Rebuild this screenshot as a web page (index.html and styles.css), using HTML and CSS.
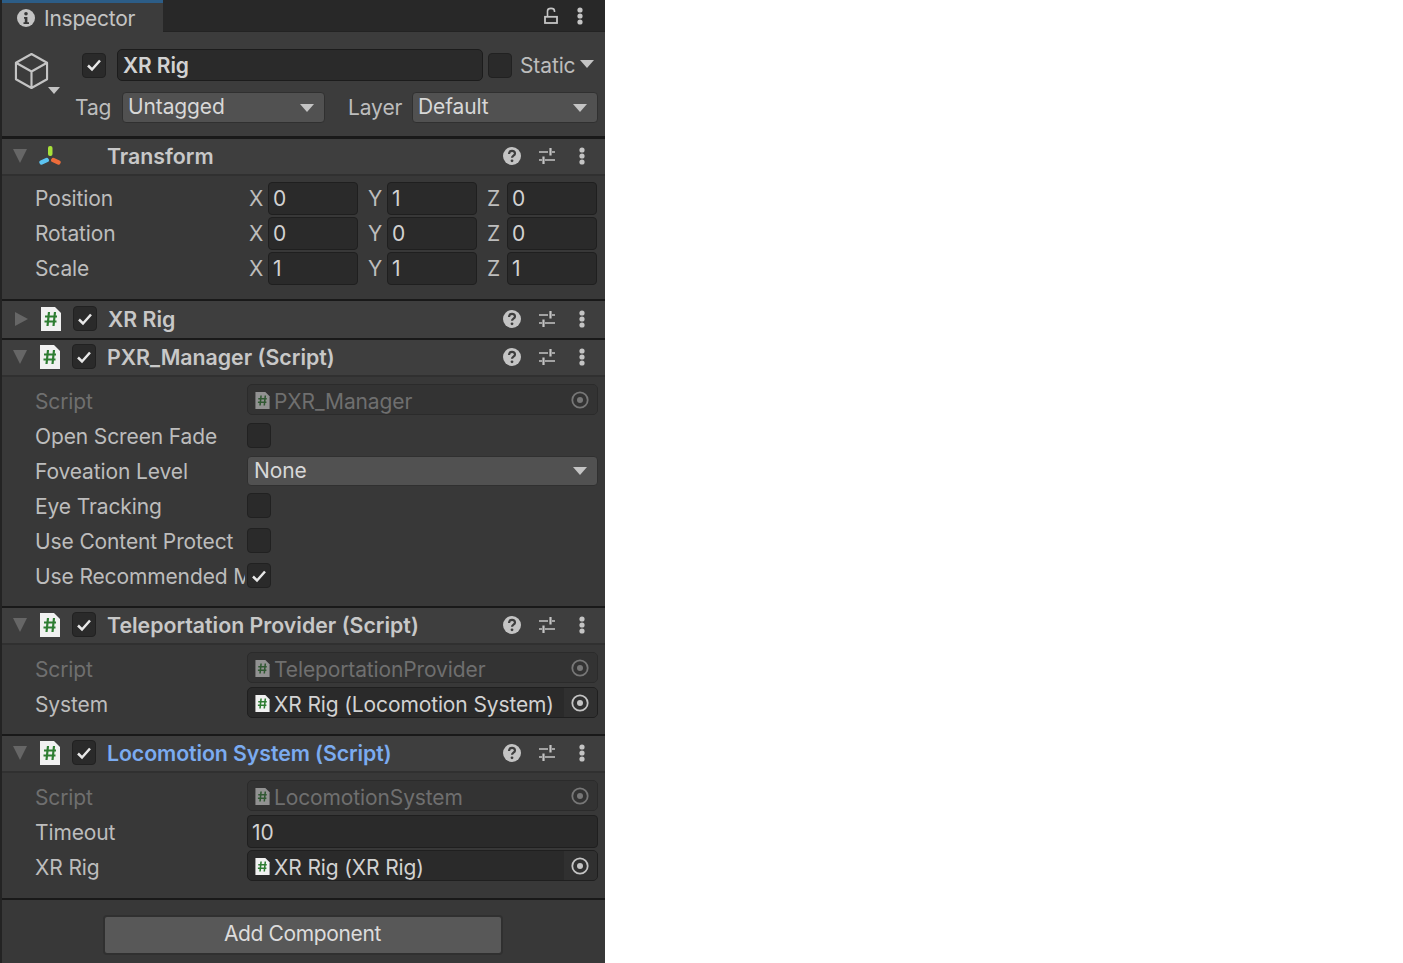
FILE: index.html
```html
<!DOCTYPE html>
<html lang="en">
<head>
<meta charset="utf-8">
<title>Inspector</title>
<link rel="stylesheet" href="styles.css">
</head>
<body>
<svg class="defs" width="0" height="0" aria-hidden="true">
  <symbol id="help" viewBox="0 0 18 18"><circle cx="9" cy="9" r="9" fill="#c4c4c4"/><path d="M6 7c0-4 6-4 6-.6 0 2.300-3 2.100-3 4.300" fill="none" stroke="#3e3e3e" stroke-width="2.200"/><circle cx="9" cy="13.800" r="1.400" fill="#3e3e3e"/></symbol>
  <symbol id="sliders" viewBox="0 0 18 18"><path d="M1 5h9M14 5h3M1 13h3M7 13h10" fill="none" stroke="#c4c4c4" stroke-width="1.400"/><path d="M12.500 1v7.500M5.500 9.500V17" stroke="#c4c4c4" stroke-width="2.200"/></symbol>
  <symbol id="dots" viewBox="0 0 6 18"><circle cx="3" cy="3" r="2.600" fill="#c4c4c4"/><circle cx="3" cy="9" r="2.600" fill="#c4c4c4"/><circle cx="3" cy="15" r="2.600" fill="#c4c4c4"/></symbol>
  <symbol id="check" viewBox="0 0 16 14"><path d="M2 7.500l4 4 8-9" fill="none" stroke="#e8e8e8" stroke-width="2.500"/></symbol>
  <symbol id="script" viewBox="0 0 20 24"><path d="M0 0h14l6 6v18H0z" fill="#f1f1f1"/><path d="M8 5L6.500 19M14 5l-1.500 14M4 9.500h12M3.500 14.500h12" fill="none" stroke="#2e7d32" stroke-width="2.200"/></symbol>
  <symbol id="target" viewBox="0 0 18 18"><circle cx="9" cy="9" r="7.700" fill="none" stroke="currentColor" stroke-width="1.800"/><circle cx="9" cy="9" r="3" fill="currentColor"/></symbol>
</svg>
<main class="inspector">
  <div class="tabbar">
    <div class="tab">
      <svg class="tab-info" viewBox="0 0 18 18"><circle cx="9" cy="9" r="9" fill="#c4c4c4"/><circle cx="9" cy="4.800" r="1.800" fill="#383838"/><path d="M7 8h3.400v5.200H12V15H6.500v-1.800h1.300V9.800H7z" fill="#383838"/></svg>
      <span class="tab-title">Inspector</span>
    </div>
    <div class="tab-tools">
      <svg class="lock" viewBox="0 0 14 17"><path d="M3.500 9.500V4C3.500 .5 10.500 .5 10.500 4v1" fill="none" stroke="#c4c4c4" stroke-width="1.600"/><rect x="1" y="9.800" width="12" height="6.200" fill="none" stroke="#c4c4c4" stroke-width="1.800"/></svg>
      <svg class="dots"><use href="#dots"/></svg>
    </div>
  </div>
  <section class="object">
    <div class="object-icon">
      <svg class="cube" viewBox="0 0 36 38"><path d="M18 2l16 9v17l-16 9-16-9V11zM2 11l16 9 16-9M18 20v17" fill="none" stroke="#c4c4c4" stroke-width="2.200" stroke-linejoin="round"/></svg>
      <i class="caret cube-caret"></i>
    </div>
    <div class="object-main">
      <div class="object-row">
        <span class="box"><svg class="tick"><use href="#check"/></svg></span>
        <div class="name-field">XR Rig</div>
        <span class="box"></span>
        <span class="static">Static</span><i class="caret"></i>
      </div>
      <div class="object-row second">
        <span class="tag-label">Tag</span>
        <div class="dropdown tag-drop"><span>Untagged</span><i class="caret"></i></div>
        <span class="layer-label">Layer</span>
        <div class="dropdown layer-drop"><span>Default</span><i class="caret"></i></div>
      </div>
    </div>
  </section>

  <section class="comp first">
    <header class="comp-head">
      <i class="fold"></i>
      <svg class="axes" viewBox="0 0 22 19"><rect x="9" y="0" width="4.500" height="10" rx="2" fill="#a8e23a"/><rect x="0" y="13" width="10" height="4.500" rx="2" fill="#5cc4f2" transform="rotate(-25 5 15)"/><rect x="12" y="13" width="10" height="4.500" rx="2" fill="#ee6c3a" transform="rotate(25 17 15)"/></svg>
      <h2>Transform</h2>
      <div class="tools"><svg class="t-help"><use href="#help"/></svg><svg class="t-sliders"><use href="#sliders"/></svg><svg class="t-dots"><use href="#dots"/></svg></div>
    </header>
    <div class="body body-transform">
      <div class="row"><label>Position</label><div class="vec"><span class="axis">X</span><div class="field">0</div><span class="axis">Y</span><div class="field">1</div><span class="axis">Z</span><div class="field">0</div></div></div>
      <div class="row"><label>Rotation</label><div class="vec"><span class="axis">X</span><div class="field">0</div><span class="axis">Y</span><div class="field">0</div><span class="axis">Z</span><div class="field">0</div></div></div>
      <div class="row"><label>Scale</label><div class="vec"><span class="axis">X</span><div class="field">1</div><span class="axis">Y</span><div class="field">1</div><span class="axis">Z</span><div class="field">1</div></div></div>
    </div>
  </section>

  <section class="comp">
    <header class="comp-head closed">
      <i class="fold fold-right"></i>
      <svg class="file"><use href="#script"/></svg>
      <span class="box"><svg class="tick"><use href="#check"/></svg></span>
      <h2>XR Rig</h2>
      <div class="tools"><svg class="t-help"><use href="#help"/></svg><svg class="t-sliders"><use href="#sliders"/></svg><svg class="t-dots"><use href="#dots"/></svg></div>
    </header>
  </section>

  <section class="comp">
    <header class="comp-head">
      <i class="fold"></i>
      <svg class="file"><use href="#script"/></svg>
      <span class="box"><svg class="tick"><use href="#check"/></svg></span>
      <h2>PXR_Manager (Script)</h2>
      <div class="tools"><svg class="t-help"><use href="#help"/></svg><svg class="t-sliders"><use href="#sliders"/></svg><svg class="t-dots"><use href="#dots"/></svg></div>
    </header>
    <div class="body body-pxr">
      <div class="row off"><label>Script</label><div class="objfield"><svg class="mini"><use href="#script"/></svg><span>PXR_Manager</span><b><svg class="target"><use href="#target"/></svg></b></div></div>
      <div class="row"><label>Open Screen Fade</label><span class="box"></span></div>
      <div class="row"><label>Foveation Level</label><div class="dropdown wide"><span>None</span><i class="caret"></i></div></div>
      <div class="row"><label>Eye Tracking</label><span class="box"></span></div>
      <div class="row"><label>Use Content Protect</label><span class="box"></span></div>
      <div class="row"><label>Use Recommended MSAA</label><span class="box"><svg class="tick"><use href="#check"/></svg></span></div>
    </div>
  </section>

  <section class="comp">
    <header class="comp-head">
      <i class="fold"></i>
      <svg class="file"><use href="#script"/></svg>
      <span class="box"><svg class="tick"><use href="#check"/></svg></span>
      <h2>Teleportation Provider (Script)</h2>
      <div class="tools"><svg class="t-help"><use href="#help"/></svg><svg class="t-sliders"><use href="#sliders"/></svg><svg class="t-dots"><use href="#dots"/></svg></div>
    </header>
    <div class="body body-tele">
      <div class="row off"><label>Script</label><div class="objfield"><svg class="mini"><use href="#script"/></svg><span>TeleportationProvider</span><b><svg class="target"><use href="#target"/></svg></b></div></div>
      <div class="row"><label>System</label><div class="objfield"><svg class="mini"><use href="#script"/></svg><span>XR Rig (Locomotion System)</span><b><svg class="target"><use href="#target"/></svg></b></div></div>
    </div>
  </section>

  <section class="comp">
    <header class="comp-head">
      <i class="fold"></i>
      <svg class="file"><use href="#script"/></svg>
      <span class="box"><svg class="tick"><use href="#check"/></svg></span>
      <h2 class="changed">Locomotion System (Script)</h2>
      <div class="tools"><svg class="t-help"><use href="#help"/></svg><svg class="t-sliders"><use href="#sliders"/></svg><svg class="t-dots"><use href="#dots"/></svg></div>
    </header>
    <div class="body body-loco">
      <div class="row off"><label>Script</label><div class="objfield"><svg class="mini"><use href="#script"/></svg><span>LocomotionSystem</span><b><svg class="target"><use href="#target"/></svg></b></div></div>
      <div class="row"><label>Timeout</label><div class="field full">10</div></div>
      <div class="row"><label>XR Rig</label><div class="objfield"><svg class="mini"><use href="#script"/></svg><span>XR Rig (XR Rig)</span><b><svg class="target"><use href="#target"/></svg></b></div></div>
    </div>
  </section>

  <div class="footer"><button class="add" type="button"><span class="add-label">Add Component</span></button></div>
</main>
</body>
</html>
```
FILE: styles.css
```css
* { box-sizing: border-box; }
html, body { margin: 0; height: 100%; background: #fff; overflow: hidden; }
body { font-family: Inter, "Liberation Sans", sans-serif; font-size: 21px; letter-spacing: -.12px; color: #c4c4c4; }
.defs { position: absolute; }
svg { display: block; flex: none; }
.inspector { width: 605px; height: 963px; background: #383838; border-left: 2px solid #232323; display: flex; flex-direction: column; overflow: hidden; }

.tabbar { height: 32px; background: #282828; display: flex; justify-content: space-between; flex: none; border-bottom: 1px solid #232323; }
.tab { width: 161px; height: 32px; background: #3c3c3c; border-top: 3px solid #2c5d87; display: flex; align-items: center; padding-left: 15px; gap: 9px; color: #c4c4c4; position: relative; z-index: 1; }
.tab-info { width: 18px; height: 18px; }
.tab-title { margin-top: 2px; letter-spacing: -.25px; }
.tab-tools { display: flex; align-items: center; gap: 19px; padding-right: 22px; height: 31px; }
.lock { width: 14px; height: 17px; }
.dots { width: 6px; height: 18px; }

.object { height: 104px; background: #3c3c3c; display: flex; flex: none; padding-left: 12px; }
.object-icon { width: 46px; position: relative; padding-top: 20px; }
.cube { width: 35px; height: 37px; }
.caret { display: block; flex: none; width: 0; height: 0; border-left: 7px solid transparent; border-right: 7px solid transparent; border-top: 8px solid #c4c4c4; }
.caret.cube-caret { position: absolute; left: 34px; top: 55px; border-left-width: 6.500px; border-right-width: 6.500px; border-top-width: 7px; }
.object-main { flex: 1; padding-top: 17px; }
.object-row { display: flex; align-items: center; height: 32px; }
.object-row.second { margin-top: 11px; height: 31px; }
.box { width: 24px; height: 25px; flex: none; background: #2a2a2a; border: 1px solid #212121; border-radius: 4px; display: flex; align-items: center; justify-content: center; }
.tick { width: 16px; height: 14px; }
.object-row > .box:first-child { margin-left: 22px; }
.name-field { width: 366px; height: 32px; margin-left: 11px; background: #2a2a2a; border: 1px solid #1c1c1c; border-radius: 5px; font-weight: 600; line-height: 31px; padding-left: 5px; color: #d2d2d2; letter-spacing: -.1px; }
.name-field + .box { margin-left: 5px; }
.static { margin-left: 8px; color: #bdbdbd; }
.static + .caret { margin-left: 5px; margin-top: -2px; }
.tag-label { margin-left: 15px; width: 47px; color: #bdbdbd; }
.layer-label { margin-left: 23px; width: 64px; color: #bdbdbd; }
.dropdown { height: 31px; background: #515151; border: 1px solid #303030; border-radius: 4px; display: flex; align-items: center; justify-content: space-between; padding: 0 10px 0 5px; color: #d8d8d8; line-height: 1; }
.object-row .dropdown span { margin-top: -2px; }
.tag-drop { width: 203px; }
.layer-drop { width: 186px; }
.dropdown.wide { flex: 1; height: 30px; padding-left: 6px; }

.comp { border-top: 2px solid #191919; flex: none; }
.comp.first { border-top-width: 3px; }
.comp-head { height: 37px; background: #3e3e3e; display: flex; align-items: center; position: relative; padding-bottom: 2px; border-bottom: 2px solid #303030; }
.comp-head.closed { border-bottom: 0; }
.fold { width: 0; height: 0; margin-left: 11px; border-left: 7.500px solid transparent; border-right: 7.500px solid transparent; border-top: 14px solid #666; flex: none; }
.fold-right { margin-left: 13px; border-top: 7.500px solid transparent; border-bottom: 7.500px solid transparent; border-left: 13px solid #666; border-right: 0; }
.axes { width: 22px; height: 19px; margin-left: 12px; }
.axes + h2 { margin-left: 46px; }
.file { width: 20px; height: 24px; margin-left: 13px; }
.comp-head .box { margin-left: 12px; }
.comp-head .box + h2 { margin-left: 11px; }
h2 { margin: 0; font-size: 21.300px; font-weight: 600; letter-spacing: 0; color: #c8c8c8; white-space: nowrap; }
h2.changed { color: #7babf0; letter-spacing: -.08px; }
.tools { position: absolute; right: 0; top: 0; bottom: 2px; display: flex; align-items: center; }
.t-help { width: 18px; height: 18px; margin-right: 17px; }
.t-sliders { width: 18px; height: 18px; margin-right: 23px; }
.t-dots { width: 6px; height: 18px; margin-right: 20px; }

.body { padding: 0 7px 0 33px; }
.body-transform { padding-top: 4px; padding-bottom: 14px; }
.body-pxr { padding-top: 6px; padding-bottom: 13px; }
.body-tele { padding-top: 6px; padding-bottom: 13px; }
.body-loco { padding-top: 6px; padding-bottom: 14px; }
.row { height: 35px; display: flex; align-items: center; }
.row label { width: 210px; margin-right: 2px; margin-top: 2px; flex: none; overflow: hidden; white-space: nowrap; color: #bdbdbd; }
.row.off label { color: #6f6f6f; }
.vec { flex: 1; display: grid; grid-template-columns: 19px 90px 29px 90px 30px 90px; align-items: center; padding-left: 2px; margin-top: 2px; }
.axis { color: #bdbdbd; line-height: 1; }
.axis:not(:first-child) { margin-left: 10px; }
.field { height: 33px; background: #2a2a2a; border: 1px solid #1f1f1f; border-radius: 4px; line-height: 32px; padding-left: 4px; color: #d2d2d2; }
.field.full { flex: 1; line-height: 33px; }
.objfield { flex: 1; min-width: 0; height: 31px; margin-bottom: 2px; background: #2a2a2a; border: 1px solid #1f1f1f; border-radius: 5px; display: flex; align-items: center; padding-left: 7px; color: #d2d2d2; }
.objfield span { flex: 1; min-width: 0; margin-left: 4px; margin-top: 4px; white-space: nowrap; }
.objfield b { width: 33px; height: 29px; flex: none; padding-right: 2px; background: #303030; display: flex; align-items: center; justify-content: center; border-radius: 0 4px 4px 0; color: #c4c4c4; }
.mini { width: 15px; height: 17px; margin-top: 2px; }
.target { width: 18px; height: 18px; }
.row.off .objfield { background: #333; border-color: #2b2b2b; color: #6f6f6f; }
.row.off .objfield b { background: #333; color: #777; }
.row.off .mini { opacity: .5; }

.footer { flex: 1; border-top: 2px solid #191919; display: flex; justify-content: center; padding-top: 15px; padding-right: 2px; }
.add { width: 400px; height: 40px; background: #585858; border: 2px solid #303030; border-radius: 4px; color: #dcdcdc; font: inherit; letter-spacing: -.36px; padding: 0 0 3px; }
.add-label { display: block; }
```
